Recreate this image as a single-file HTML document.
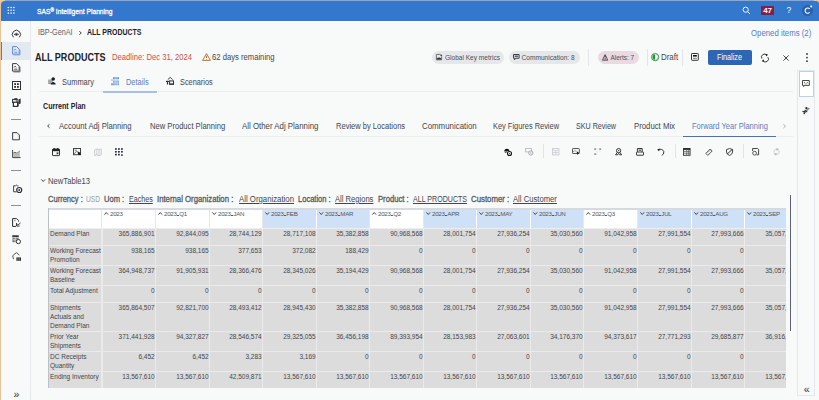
<!DOCTYPE html>
<html><head><meta charset="utf-8">
<style>
*{margin:0;padding:0;box-sizing:border-box}
html,body{width:819px;height:400px;overflow:hidden;background:#f8f9f9;font-family:"Liberation Sans",sans-serif;position:relative}
.a{position:absolute;white-space:nowrap}
svg{position:absolute;overflow:visible}
</style></head><body>

<div class="a" style="left:0px;top:0px;width:819px;height:1px;background:#9ca6b2;"></div>
<div class="a" style="left:0px;top:0px;width:5px;height:5px;background:#efc993;"></div>
<div class="a" style="left:814px;top:0px;width:5px;height:5px;background:#efc993;"></div>
<div class="a" style="left:1px;top:1px;width:818px;height:20px;background:#3378cc;border-top-left-radius:4px;border-top-right-radius:3px"></div>
<svg style="left:0px;top:0px" width="20" height="20" viewBox="0 0 20 20"><g fill="#fff"><circle cx="8.3" cy="7.5" r="0.8"/><circle cx="11.100000000000001" cy="7.5" r="0.8"/><circle cx="13.9" cy="7.5" r="0.8"/><circle cx="8.3" cy="10.3" r="0.8"/><circle cx="11.100000000000001" cy="10.3" r="0.8"/><circle cx="13.9" cy="10.3" r="0.8"/><circle cx="8.3" cy="13.1" r="0.8"/><circle cx="11.100000000000001" cy="13.1" r="0.8"/><circle cx="13.9" cy="13.1" r="0.8"/></g></svg>
<div class="a" style="left:37px;top:7.00px;font-size:7.8px;line-height:7.8px;color:#fff;font-weight:normal;letter-spacing:0px;-webkit-text-stroke:0.3px #fff;transform:scaleX(0.8612827505765044);transform-origin:0 0;">SAS<span style="font-size:5.5px;vertical-align:1.5px">®</span> Intelligent Planning</div>
<svg style="left:742px;top:6px" width="9" height="9" viewBox="0 0 9 9"><circle cx="3.7" cy="3.7" r="2.6" fill="none" stroke="#fff" stroke-width="0.9"/><path d="M5.6 5.6 L7.8 7.8" stroke="#fff" stroke-width="1"/></svg>
<div class="a" style="left:761px;top:6px;width:13px;height:9px;background:#8c1d42;"></div>
<div class="a" style="left:761px;top:6px;width:13px;height:9px;font-size:8px;line-height:9px;color:#fff;font-weight:bold;text-align:center;letter-spacing:-0.2px">47</div>
<div class="a" style="left:786.6px;top:6.00px;font-size:8.5px;line-height:8.5px;color:#fff;font-weight:normal;letter-spacing:0px;">?</div>
<svg style="left:801px;top:4px" width="13" height="13" viewBox="0 0 13 13"><circle cx="6.5" cy="6.6" r="5.6" fill="#2a60ad"/><path d="M8.7 5 A2.6 2.6 0 1 0 8.7 8.3" fill="none" stroke="#fff" stroke-width="1.05"/><circle cx="10.2" cy="2.5" r="1.05" fill="#fff"/></svg>
<div class="a" style="left:1px;top:21px;width:29px;height:379px;background:#f8f9f9;"></div>
<div class="a" style="left:30px;top:21px;width:1px;height:379px;background:#e6e8ec;"></div>
<div class="a" style="left:1px;top:42px;width:29px;height:18px;background:#e3e9f1;"></div>
<div class="a" style="left:1px;top:42px;width:1px;height:18px;background:#4a82d0;"></div>
<div class="a" style="left:0px;top:3px;width:1px;height:397px;background:#e8c49b;"></div>
<div class="a" style="left:37.5px;top:28.00px;font-size:8.5px;line-height:8.5px;color:#5d6269;font-weight:normal;letter-spacing:0px;transform:scaleX(0.8491644282598114);transform-origin:0 0;">IBP-GenAI</div>
<svg style="left:79px;top:30.6px" width="3" height="4" viewBox="0 0 3 4"><path d="M0.3 0.3 L2.3 2 L0.3 3.7" fill="none" stroke="#333" stroke-width="0.9"/></svg>
<div class="a" style="left:86.5px;top:28.00px;font-size:8.5px;line-height:8.5px;color:#1e2229;font-weight:bold;letter-spacing:0px;transform:scaleX(0.8185571697822628);transform-origin:0 0;">ALL PRODUCTS</div>
<div class="a" style="left:750.6px;top:29.00px;font-size:8.5px;line-height:8.5px;color:#5580bf;font-weight:normal;letter-spacing:0px;transform:scaleX(0.9182627317138459);transform-origin:0 0;">Opened items (2)</div>
<div class="a" style="left:35px;top:53.00px;font-size:10px;line-height:10px;color:#1e2229;font-weight:bold;letter-spacing:0px;transform:scaleX(0.90131405061713);transform-origin:0 0;">ALL PRODUCTS</div>
<div class="a" style="left:111.5px;top:53.00px;font-size:8.5px;line-height:8.5px;color:#c8524c;font-weight:normal;letter-spacing:0px;transform:scaleX(0.9005042801984143);transform-origin:0 0;">Deadline: Dec 31, 2024</div>
<svg style="left:202px;top:53px" width="9" height="8" viewBox="0 0 9 8"><path d="M4.5 0.6 L8.4 7.4 L0.6 7.4 Z" fill="none" stroke="#b5651d" stroke-width="0.9" stroke-linejoin="round"/><path d="M4.5 2.8 V5" stroke="#b5651d" stroke-width="0.9"/><circle cx="4.5" cy="6.2" r="0.45" fill="#b5651d"/></svg>
<div class="a" style="left:212px;top:53.00px;font-size:8.5px;line-height:8.5px;color:#42464d;font-weight:normal;letter-spacing:0px;transform:scaleX(0.9012798115959859);transform-origin:0 0;">62 days remaining</div>
<div class="a" style="left:432px;top:51px;width:72px;height:13px;background:#e5e7ea;border-radius:7px"></div>
<div class="a" style="left:445px;top:55.00px;font-size:6.55px;line-height:6.55px;color:#4a4f57;font-weight:normal;letter-spacing:0px;">Global Key metrics</div>
<div class="a" style="left:509px;top:51px;width:71px;height:13px;background:#e5e7ea;border-radius:7px"></div>
<div class="a" style="left:521.5px;top:55.00px;font-size:6.6px;line-height:6.6px;color:#4a4f57;font-weight:normal;letter-spacing:0px;">Communication: 8</div>
<div class="a" style="left:588px;top:49px;width:1px;height:17px;background:#e4e6e9;"></div>
<div class="a" style="left:597.5px;top:51px;width:41.5px;height:13px;background:#ebd9e2;border-radius:7px"></div>
<div class="a" style="left:610.5px;top:55.00px;font-size:6.45px;line-height:6.45px;color:#4a4f57;font-weight:normal;letter-spacing:0px;">Alerts: 7</div>
<div class="a" style="left:647px;top:49px;width:1px;height:17px;background:#e4e6e9;"></div>
<svg style="left:650.5px;top:53px" width="9" height="9" viewBox="0 0 9 9"><circle cx="4.2" cy="4.2" r="3.6" fill="none" stroke="#3c9a4a" stroke-width="1"/><path d="M4.2 1.6 A2.6 2.6 0 0 0 4.2 6.8 Z" fill="#3c9a4a"/></svg>
<div class="a" style="left:660.5px;top:53.00px;font-size:8.5px;line-height:8.5px;color:#42464d;font-weight:normal;letter-spacing:0px;transform:scaleX(0.928367309068738);transform-origin:0 0;">Draft</div>
<div class="a" style="left:681.5px;top:49px;width:1px;height:17px;background:#e4e6e9;"></div>
<svg style="left:691.1px;top:53.3px" width="8" height="8" viewBox="0 0 8 8"><rect x="0.5" y="0.5" width="6.8" height="6.8" rx="0.6" fill="none" stroke="#333" stroke-width="1"/><rect x="2" y="2" width="3.8" height="1.6" fill="#111"/><rect x="2" y="4.8" width="3.8" height="1" fill="#777"/></svg>
<div class="a" style="left:708px;top:50px;width:44px;height:15px;background:#2c66b4;border-radius:2px"></div>
<div class="a" style="left:717px;top:53.00px;font-size:8.5px;line-height:8.5px;color:#fff;font-weight:normal;letter-spacing:0px;transform:scaleX(0.8535538347406413);transform-origin:0 0;">Finalize</div>
<svg style="left:760.8px;top:53.8px" width="8" height="8" viewBox="0 0 8 8"><path d="M5.9 1.3 A3 3 0 0 0 0.9 4.6 M2 6.7 A3 3 0 0 0 6.9 3.2" fill="none" stroke="#222" stroke-width="0.9"/><path d="M4.6 0 L7 0.6 L5.4 2.6Z M3.2 7.8 L0.8 7.2 L2.4 5.2Z" fill="#111"/></svg>
<svg style="left:782.8px;top:55.2px" width="6" height="6" viewBox="0 0 6 6"><path d="M0.4 0.4 L5.6 5.6 M5.6 0.4 L0.4 5.6" stroke="#222" stroke-width="0.85"/></svg>
<svg style="left:805.5px;top:53px" width="2" height="10" viewBox="0 0 2 10"><circle cx="1" cy="1" r="0.9" fill="#333"/><circle cx="1" cy="4.6" r="0.9" fill="#333"/><circle cx="1" cy="8.2" r="0.9" fill="#333"/></svg>
<svg style="left:12px;top:30px" width="10" height="10" viewBox="0 0 10 10"><path d="M1.5 7.3 A4.1 4.1 0 1 1 7.3 7.3" fill="none" stroke="#2b2f36" stroke-width="0.95"/><path d="M2.2 4.4 Q4.4 2.2 6.6 4.4 Q4.4 6.4 2.2 4.4Z" fill="none" stroke="#2b2f36" stroke-width="0.8"/><circle cx="4.4" cy="4.4" r="0.8" fill="#2b2f36"/></svg>
<svg style="left:12.3px;top:46.3px" width="10" height="10" viewBox="0 0 10 10"><path d="M0.6 0.6 H4.7 L7.2 3.1 V8.1 H0.6 Z" fill="none" stroke="#5a8ed6" stroke-width="1" stroke-linejoin="round"/><path d="M1.5 9 H8.1 V3.8" fill="none" stroke="#5a8ed6" stroke-width="0.8" opacity="0.75"/><path d="M2.2 4.4 L3.2 3 L4.2 4.4" fill="none" stroke="#5a8ed6" stroke-width="0.8"/><path d="M2.2 6.2 H5.4" stroke="#5a8ed6" stroke-width="0.9"/></svg>
<svg style="left:12.3px;top:63.3px" width="10" height="10" viewBox="0 0 10 10"><path d="M0.6 0.6 H4.7 L7.2 3.1 V8.1 H0.6 Z" fill="none" stroke="#3a3e45" stroke-width="1" stroke-linejoin="round"/><path d="M1.5 9 H8.1 V3.8" fill="none" stroke="#3a3e45" stroke-width="0.8" opacity="0.75"/><path d="M2.2 4.4 L3.2 3 L4.2 4.4" fill="none" stroke="#3a3e45" stroke-width="0.8"/><path d="M2.2 6.2 H5.4" stroke="#3a3e45" stroke-width="0.9"/></svg>
<svg style="left:12px;top:81px" width="10" height="10" viewBox="0 0 10 10"><rect x="0.5" y="0.5" width="8" height="8" fill="none" stroke="#2b2f36" stroke-width="1"/><rect x="2.2" y="2.2" width="1.8" height="1.8" fill="#2b2f36"/><rect x="5" y="2.2" width="1.8" height="1.8" fill="#2b2f36"/><rect x="2.2" y="5" width="1.8" height="1.8" fill="#2b2f36"/><rect x="5" y="5" width="1.8" height="1.8" fill="#2b2f36"/></svg>
<svg style="left:12px;top:97.8px" width="10" height="10" viewBox="0 0 10 10"><rect x="0.6" y="1.4" width="4.4" height="3.2" fill="none" stroke="#2b2f36" stroke-width="1"/><path d="M2.4 0.2 H5.4 V2.2 H2.4Z" fill="#2b2f36"/><rect x="1.4" y="4.2" width="4.2" height="4.2" fill="#fff" stroke="#2b2f36" stroke-width="1.2"/><path d="M5.6 4.4 L6.6 3.6 V8 L5.6 8.6Z" fill="#2b2f36"/><path d="M6.4 1.4 L8.6 0.6 V5.4 L6.6 6.2Z" fill="#2b2f36"/></svg>
<div class="a" style="left:11px;top:119px;width:10px;height:1px;background:#8d9197;"></div>
<svg style="left:12.1px;top:132.3px" width="10" height="10" viewBox="0 0 10 10"><path d="M0.6 0.6 H5 L7.4 3 V7.8 H0.6 Z" fill="#eef0f2" stroke="#444" stroke-width="1" stroke-linejoin="round"/><rect x="2.6" y="2.6" width="2.4" height="4" fill="#fff"/></svg>
<svg style="left:12px;top:149.5px" width="10" height="10" viewBox="0 0 10 10"><path d="M0.6 0 V7.6 H8.6" fill="none" stroke="#444" stroke-width="1"/><path d="M1.2 3.2 L3 2.2 L5 3.4 L7.8 1" fill="none" stroke="#444" stroke-width="0.9"/><path d="M1.2 3.6 L3 2.6 L5 3.8 L7.8 1.5 V7 H1.2Z" fill="#bbb"/></svg>
<div class="a" style="left:11px;top:170px;width:10px;height:1px;background:#8d9197;"></div>
<svg style="left:12.5px;top:183.6px" width="10" height="10" viewBox="0 0 10 10"><path d="M3.6 7.8 H0.6 V1.8 H2.6 Q3.3 0.4 4.2 1.8 H5.4" fill="none" stroke="#444" stroke-width="1"/><circle cx="6.2" cy="6" r="2.5" fill="none" stroke="#2b2f36" stroke-width="1.2"/><circle cx="6.2" cy="6" r="0.9" fill="#2b2f36"/></svg>
<div class="a" style="left:11px;top:205px;width:10px;height:1px;background:#8d9197;"></div>
<svg style="left:12px;top:218px" width="10" height="10" viewBox="0 0 10 10"><path d="M4 8.4 H0.6 V0.6 H4.6 L6.6 2.6 V3.6" fill="none" stroke="#2b2f36" stroke-width="1"/><path d="M2.2 2.6 H3.6" stroke="#666" stroke-width="0.8"/><path d="M4.6 5 V8 H7.6" fill="none" stroke="#2b2f36" stroke-width="1"/><path d="M5.4 6 L6.4 7 L8.4 4.6" fill="none" stroke="#2b2f36" stroke-width="0.9"/></svg>
<svg style="left:12px;top:235px" width="10" height="10" viewBox="0 0 10 10"><rect x="0.4" y="0.4" width="6.2" height="6.8" fill="#777"/><path d="M0.4 2.6 H6.6 M0.4 4.8 H6.6 M3.2 0.4 V7.2" stroke="#eee" stroke-width="0.7"/><rect x="0.4" y="0.4" width="6.2" height="1.5" fill="#2b2f36"/><circle cx="6.4" cy="6.6" r="2.1" fill="#fff" stroke="#2b2f36" stroke-width="1"/></svg>
<svg style="left:12px;top:252px" width="10" height="10" viewBox="0 0 10 10"><path d="M1.6 7.2 L0.6 3.8 L4.4 0.6 L7.4 3.2" fill="none" stroke="#555" stroke-width="1"/><rect x="4.4" y="5.4" width="4.6" height="3.4" fill="#333"/><path d="M5.9 5.4 V8.8 M7.4 5.4 V8.8" stroke="#aaa" stroke-width="0.5"/></svg>
<div class="a" style="left:13.6px;top:389.00px;font-size:10.5px;line-height:10.5px;color:#333;font-weight:normal;letter-spacing:0px;">»</div>
<svg style="left:47.8px;top:77.3px" width="9" height="9" viewBox="0 0 9 9"><rect x="0.3" y="2.6" width="4.4" height="4.4" fill="#8a8d92"/><path d="M0.8 3.8 H4.2 M0.8 5.4 H4.2" stroke="#d8d9db" stroke-width="0.6"/><circle cx="5.2" cy="2" r="1.8" fill="#1d2026"/><path d="M2.8 7.6 V6.6 Q5.2 3.4 7.6 6.6 V7.6Z" fill="#1d2026"/></svg>
<svg style="left:111px;top:77px" width="9" height="9" viewBox="0 0 9 9"><rect x="2" y="0.3" width="6" height="1.5" fill="#4d84d0"/><rect x="0" y="2.5" width="8" height="1.2" fill="#9dbce6"/><rect x="2" y="4.3" width="6" height="1.3" fill="#5f90d6"/><rect x="0" y="6.3" width="8" height="1.9" fill="#7aa4de"/><path d="M4.1 0 V8.4 M6.1 0 V8.4" stroke="#f8f9f9" stroke-width="0.45"/></svg>
<svg style="left:165.8px;top:77.3px" width="9" height="9" viewBox="0 0 9 9"><path d="M1.8 2.6 L4.2 0.4 L6.6 2.6" fill="none" stroke="#2b2f36" stroke-width="0.9"/><rect x="0" y="3.8" width="2.9" height="1.2" fill="#2b2f36"/><rect x="0.9" y="4.6" width="1.2" height="2.9" fill="#2b2f36"/><rect x="3.6" y="3.9" width="3.9" height="3.4" fill="none" stroke="#2b2f36" stroke-width="1"/><rect x="3.4" y="6.5" width="4.3" height="1.1" fill="#2b2f36"/></svg>
<svg style="left:436.3px;top:53.9px" width="7" height="7" viewBox="0 0 7 7"><path d="M0.4 0.4 H4.4 M0.4 0.4 V5.8 H5.6 V2.4" fill="none" stroke="#555" stroke-width="0.8"/><path d="M0.8 5.6 V4.4 Q3 2.6 5.3 4.4 V5.6Z" fill="#2e3238"/><circle cx="5.2" cy="1.3" r="0.9" fill="#444"/></svg>
<svg style="left:513.1px;top:53.9px" width="7" height="7" viewBox="0 0 7 7"><path d="M0.5 0.5 H6.1 V4.2 H2.6 L1.6 5.8 V4.2 H0.5 Z" fill="none" stroke="#3a3e45" stroke-width="1" stroke-linejoin="round"/><rect x="1.7" y="1.6" width="3.2" height="1.2" fill="#3a3e45"/></svg>
<svg style="left:601.8px;top:53.9px" width="7" height="7" viewBox="0 0 7 7"><path d="M3.1 0.6 L5.8 6.2 H0.4Z" fill="none" stroke="#555" stroke-width="1" stroke-linejoin="round"/><circle cx="3.1" cy="2.2" r="0.9" fill="#555"/><path d="M3.1 3.4 V6" stroke="#555" stroke-width="0.9"/></svg>
<svg style="left:651.1px;top:53.1px" width="8" height="8" viewBox="0 0 8 8"><circle cx="3.9" cy="3.85" r="3.5" fill="none" stroke="#5cae6b" stroke-width="0.6"/><rect x="2.3" y="2.1" width="1.7" height="3.5" fill="#2a8a3a"/></svg>
<div class="a" style="left:39px;top:91px;width:754px;height:1px;background:#eceef0;"></div>
<div class="a" style="left:103px;top:91px;width:54px;height:2px;background:#a7c0e4;"></div>
<div class="a" style="left:62px;top:78.00px;font-size:8.5px;line-height:8.5px;color:#42464d;font-weight:normal;letter-spacing:0px;transform:scaleX(0.8799495146152504);transform-origin:0 0;">Summary</div>
<div class="a" style="left:125.7px;top:78.00px;font-size:8.5px;line-height:8.5px;color:#5a80c2;font-weight:normal;letter-spacing:0px;transform:scaleX(0.8737004322495772);transform-origin:0 0;">Details</div>
<div class="a" style="left:180px;top:78.00px;font-size:8.5px;line-height:8.5px;color:#42464d;font-weight:normal;letter-spacing:0px;transform:scaleX(0.8651341243645807);transform-origin:0 0;">Scenarios</div>
<div class="a" style="left:43.2px;top:102.00px;font-size:8.5px;line-height:8.5px;color:#1e2229;font-weight:bold;letter-spacing:0px;transform:scaleX(0.8371186521801561);transform-origin:0 0;">Current Plan</div>
<svg style="left:46.6px;top:123.8px" width="3" height="4" viewBox="0 0 3 4"><path d="M2.5 0.3 L0.6 2 L2.5 3.7" fill="none" stroke="#333" stroke-width="0.9"/></svg>
<div class="a" style="left:58.9px;top:122.00px;font-size:8.5px;line-height:8.5px;color:#42464d;font-weight:normal;letter-spacing:0px;transform:scaleX(0.903421124986026);transform-origin:0 0;">Account Adj Planning</div>
<div class="a" style="left:149.6px;top:122.00px;font-size:8.5px;line-height:8.5px;color:#42464d;font-weight:normal;letter-spacing:0px;transform:scaleX(0.8941362253547294);transform-origin:0 0;">New Product Planning</div>
<div class="a" style="left:241.9px;top:122.00px;font-size:8.5px;line-height:8.5px;color:#42464d;font-weight:normal;letter-spacing:0px;transform:scaleX(0.9247542658508803);transform-origin:0 0;">All Other Adj Planning</div>
<div class="a" style="left:335.9px;top:122.00px;font-size:8.5px;line-height:8.5px;color:#42464d;font-weight:normal;letter-spacing:0px;transform:scaleX(0.8863885052503672);transform-origin:0 0;">Review by Locations</div>
<div class="a" style="left:421.5px;top:122.00px;font-size:8.5px;line-height:8.5px;color:#42464d;font-weight:normal;letter-spacing:0px;transform:scaleX(0.9263060411119748);transform-origin:0 0;">Communication</div>
<div class="a" style="left:493.3px;top:122.00px;font-size:8.5px;line-height:8.5px;color:#42464d;font-weight:normal;letter-spacing:0px;transform:scaleX(0.87321496057651);transform-origin:0 0;">Key Figures Review</div>
<div class="a" style="left:576.4px;top:122.00px;font-size:8.5px;line-height:8.5px;color:#42464d;font-weight:normal;letter-spacing:0px;transform:scaleX(0.8384207967658572);transform-origin:0 0;">SKU Review</div>
<div class="a" style="left:633.5px;top:122.00px;font-size:8.5px;line-height:8.5px;color:#42464d;font-weight:normal;letter-spacing:0px;transform:scaleX(0.9136689081848055);transform-origin:0 0;">Product Mix</div>
<div class="a" style="left:691.6px;top:122.00px;font-size:8.5px;line-height:8.5px;color:#5a80c2;font-weight:normal;letter-spacing:0px;transform:scaleX(0.8833039565185357);transform-origin:0 0;">Forward Year Planning</div>
<div class="a" style="left:39px;top:136px;width:754px;height:1px;background:#eceef0;"></div>
<div class="a" style="left:683px;top:135.5px;width:93px;height:1.5px;background:#4573bf;"></div>
<svg style="left:783px;top:124px" width="3" height="4.5" viewBox="0 0 3 4.5"><path d="M0.4 0.3 L2.4 2.2 L0.4 4.1" fill="none" stroke="#a0a4aa" stroke-width="0.9"/></svg>
<div class="a" style="left:797px;top:70px;width:18px;height:326px;background:#f8f9f9;border:1px solid #e4e7eb"></div>
<div class="a" style="left:798.5px;top:71px;width:15.5px;height:26px;background:#fff;border:1px solid #bcd0ea"></div>
<div class="a" style="left:542.5px;top:144px;width:1px;height:14px;background:#e0e3e7;"></div>
<div class="a" style="left:674.5px;top:144px;width:1px;height:14px;background:#e0e3e7;"></div>
<div class="a" style="left:742.5px;top:144px;width:1px;height:14px;background:#e0e3e7;"></div>
<svg style="left:52px;top:148px" width="8" height="8" viewBox="0 0 8 8"><rect x="0.5" y="1" width="7" height="6.6" rx="0.6" fill="none" stroke="#333" stroke-width="1"/><rect x="0.5" y="1" width="7" height="2.2" fill="#222"/><rect x="1.6" y="0" width="1.1" height="1.4" fill="#222"/><rect x="5.2" y="0" width="1.1" height="1.4" fill="#222"/><rect x="4.6" y="4.4" width="1.8" height="1.8" fill="#333"/></svg>
<svg style="left:73px;top:148.1px" width="8" height="8" viewBox="0 0 8 8"><rect x="0.5" y="0.5" width="7" height="6.2" fill="none" stroke="#444" stroke-width="1"/><path d="M1.6 2.2 H3.8 M1 6 L3.6 3.2 L5 4 L7 5" fill="none" stroke="#555" stroke-width="0.8"/><path d="M4.6 4 L7.5 4.8 V6.7 H5.2Z" fill="#111"/></svg>
<svg style="left:94.1px;top:147.8px" width="8" height="8" viewBox="0 0 8 8"><path d="M0.6 2 L2.8 1 L5 1.8 L7.2 0.8 V6.8 L5 7.6 L2.8 6.8 L0.6 7.6Z" fill="none" stroke="#c4c7cb" stroke-width="0.9"/><path d="M2.8 1 V6.8 M5 1.8 V7.6" stroke="#c4c7cb" stroke-width="0.8"/></svg>
<svg style="left:115px;top:148px" width="8" height="8" viewBox="0 0 8 8"><g fill="#2b2f36"><rect x="0" y="0.2" width="1.8" height="1.6"/><rect x="3" y="0.2" width="1.8" height="1.6"/><rect x="6" y="0.2" width="1.8" height="1.6"/><rect x="0" y="3" width="1.8" height="1.6"/><rect x="3" y="3" width="1.8" height="1.6"/><rect x="6" y="3" width="1.8" height="1.6"/><rect x="0" y="5.8" width="1.8" height="1.6"/><rect x="3" y="5.8" width="1.8" height="1.6"/><rect x="6" y="6.4" width="1.8" height="1.4"/></g></svg>
<svg style="left:504.2px;top:147.6px" width="8" height="8" viewBox="0 0 8 8"><path d="M0.3 3.4 A2.6 2.6 0 0 1 5.5 3.4 Z" fill="#111"/><rect x="0.8" y="3.9" width="1.8" height="0.8" fill="#222"/><circle cx="5.5" cy="5.5" r="2.7" fill="#f8f9f9"/><circle cx="5.5" cy="5.5" r="2" fill="none" stroke="#111" stroke-width="1.1"/><circle cx="5.5" cy="5.5" r="0.6" fill="#333"/></svg>
<svg style="left:525.1px;top:147.8px" width="8" height="8" viewBox="0 0 8 8"><rect x="0.5" y="0.5" width="6" height="3.4" fill="none" stroke="#b8bbc0" stroke-width="0.9"/><circle cx="5.8" cy="5" r="2.1" fill="#f8f9f9" stroke="#a8abb0" stroke-width="1"/><path d="M5.8 4 V6" stroke="#aaa" stroke-width="0.7"/></svg>
<svg style="left:551.8px;top:147.8px" width="8" height="8" viewBox="0 0 8 8"><rect x="0.5" y="0.5" width="6.4" height="6.4" fill="none" stroke="#c9ccd0" stroke-width="0.9"/><path d="M1 2.4 H6.5 M1 4.6 H6.5 M3.7 2.4 V6.6" stroke="#c9ccd0" stroke-width="0.8"/></svg>
<svg style="left:572px;top:148px" width="8" height="8" viewBox="0 0 8 8"><rect x="0.5" y="0.5" width="6.8" height="5" rx="0.6" fill="none" stroke="#555" stroke-width="1"/><path d="M1 4 Q2.6 2 4.4 3" fill="none" stroke="#666" stroke-width="0.7"/><path d="M4.6 3.2 L7.6 5.2 L6 5.8 L5.4 7.2Z" fill="#111"/></svg>
<svg style="left:593.7px;top:148px" width="8" height="8" viewBox="0 0 8 8"><g fill="#9a9da2"><rect x="0.2" y="0.2" width="2" height="1.8"/><rect x="5.2" y="0.2" width="2" height="1.8"/><rect x="0.2" y="5.2" width="2" height="1.8"/></g><path d="M1.2 3.3 H7 M3.6 3.3 V7" stroke="#e0e2e5" stroke-width="0.4"/></svg>
<svg style="left:615.1px;top:147.8px" width="8" height="8" viewBox="0 0 8 8"><circle cx="3.6" cy="2.6" r="2.1" fill="none" stroke="#333" stroke-width="1"/><circle cx="3.6" cy="2.6" r="0.7" fill="#333"/><path d="M2.2 4.4 L0.6 6.8 H2.6 L3.6 5.4 L4.6 6.8 H6.6 L5 4.4" fill="none" stroke="#333" stroke-width="1"/></svg>
<svg style="left:636.1px;top:147.8px" width="8" height="8" viewBox="0 0 8 8"><path d="M1.4 3.8 V0.5 H6.2 V3.8" fill="none" stroke="#333" stroke-width="1"/><rect x="2.6" y="1.6" width="2.6" height="1.2" fill="#555"/><rect x="0.5" y="4" width="7" height="3.2" rx="0.5" fill="none" stroke="#333" stroke-width="1"/></svg>
<svg style="left:657px;top:147.8px" width="8" height="8" viewBox="0 0 8 8"><path d="M1.4 1.6 Q5.4 0.4 6.8 3.6 Q7.2 6.4 4.8 7.4" fill="none" stroke="#333" stroke-width="1"/><path d="M0.2 1.8 L2.6 0.4 L2.2 3.2Z" fill="#111"/></svg>
<svg style="left:683.3px;top:147.8px" width="8" height="8" viewBox="0 0 8 8"><rect x="0.5" y="0.5" width="6.6" height="6.8" fill="none" stroke="#444" stroke-width="1"/><rect x="0.5" y="0.5" width="6.6" height="1.3" fill="#111"/><path d="M0.6 3.4 H7 M0.6 5.2 H7 M3.6 1.6 V7.2 M5.4 1.6 V7.2" stroke="#666" stroke-width="0.8"/></svg>
<svg style="left:704.8px;top:147.7px" width="8" height="8" viewBox="0 0 8 8"><path d="M0.8 5.4 L5.2 1 L7.2 3 L2.8 7.4Z" fill="none" stroke="#555" stroke-width="1" stroke-linejoin="round"/><path d="M2.6 4.6 L3.2 5.2 M3.8 3.4 L4.4 4 M5 2.2 L5.6 2.8" stroke="#555" stroke-width="0.8"/></svg>
<svg style="left:726px;top:147.8px" width="8" height="8" viewBox="0 0 8 8"><path d="M3.5 0.5 L6.6 1.6 V4 Q6.4 6.4 3.5 7.4 Q0.6 6.4 0.5 4 V1.6Z" fill="none" stroke="#444" stroke-width="1"/><path d="M1.2 6 L6.4 1.4" stroke="#333" stroke-width="1"/></svg>
<svg style="left:752.1px;top:147.8px" width="8" height="8" viewBox="0 0 8 8"><path d="M0.6 3 V0.5 H5.6 L6.6 1.4 V6.8 H4.6" fill="none" stroke="#444" stroke-width="1"/><circle cx="2.6" cy="5.2" r="1.9" fill="none" stroke="#555" stroke-width="1"/></svg>
<svg style="left:773.3px;top:148px" width="8" height="8" viewBox="0 0 8 8"><path d="M5.6 1.6 A2.9 2.9 0 0 0 1 4.6 M1.2 5.6 A2.9 2.9 0 0 0 6 2.6" fill="none" stroke="#c9ccd0" stroke-width="1"/><rect x="3.2" y="0.4" width="2" height="2" fill="#b9bcc0"/><rect x="1.6" y="5.2" width="2" height="2" fill="#b9bcc0"/></svg>
<svg style="left:802px;top:80px" width="8" height="8" viewBox="0 0 8 8"><path d="M0.5 0.5 H7.3 V5.4 H2.4 L1.6 6.6 V5.4 H0.5Z" fill="none" stroke="#333" stroke-width="0.9" stroke-linejoin="round"/><circle cx="2.4" cy="2.4" r="0.5" fill="#333"/><circle cx="5.3" cy="2.4" r="0.5" fill="#333"/><path d="M2.6 3.6 Q3.9 4.4 5.2 3.6" fill="none" stroke="#555" stroke-width="0.6"/></svg>
<svg style="left:802px;top:107.3px" width="8" height="8" viewBox="0 0 8 8"><path d="M1.2 6.6 L7.4 1" stroke="#8a8d92" stroke-width="1.6"/><circle cx="4.4" cy="1.2" r="1.1" fill="#1f2329"/><path d="M2.6 2.8 L5.2 5.2" stroke="#2b2f36" stroke-width="1.1"/><path d="M0.4 4.4 L3 4.6 L2.4 7.2" fill="none" stroke="#2b2f36" stroke-width="1"/></svg>
<div class="a" style="left:803.8px;top:384.00px;font-size:10.5px;line-height:10.5px;color:#333;font-weight:normal;letter-spacing:0px;">«</div>
<svg style="left:41px;top:179px" width="4.5" height="3" viewBox="0 0 4.5 3"><path d="M0.3 0.4 L2.2 2.5 L4.1 0.4" fill="none" stroke="#333" stroke-width="0.9"/></svg>
<div class="a" style="left:48.3px;top:177.00px;font-size:8.5px;line-height:8.5px;color:#42464d;font-weight:normal;letter-spacing:0px;transform:scaleX(0.8999754706247685);transform-origin:0 0;">NewTable13</div>
<div class="a" style="left:48.3px;top:195.00px;font-size:8.5px;line-height:8.5px;color:#555a61;font-weight:normal;letter-spacing:0px;-webkit-text-stroke:0.3px #555a61;transform:scaleX(0.8876511688732236);transform-origin:0 0;">Currency :</div>
<div class="a" style="left:85.9px;top:195.00px;font-size:8.5px;line-height:8.5px;color:#9ba1a8;font-weight:normal;letter-spacing:0px;transform:scaleX(0.7856777493606135);transform-origin:0 0;">USD</div>
<div class="a" style="left:104.2px;top:195.00px;font-size:8.5px;line-height:8.5px;color:#555a61;font-weight:normal;letter-spacing:0px;-webkit-text-stroke:0.3px #555a61;transform:scaleX(0.8866564714498026);transform-origin:0 0;">Uom :</div>
<div class="a" style="left:128.9px;top:195.00px;font-size:8.5px;line-height:8.5px;color:#42464d;font-weight:normal;letter-spacing:0px;text-decoration:underline;transform:scaleX(0.8394671351193085);transform-origin:0 0;">Eaches</div>
<div class="a" style="left:156.7px;top:195.00px;font-size:8.5px;line-height:8.5px;color:#555a61;font-weight:normal;letter-spacing:0px;-webkit-text-stroke:0.3px #555a61;transform:scaleX(0.9123479783973144);transform-origin:0 0;">Internal Organization :</div>
<div class="a" style="left:238.5px;top:195.00px;font-size:8.5px;line-height:8.5px;color:#42464d;font-weight:normal;letter-spacing:0px;text-decoration:underline;transform:scaleX(0.91663309856003);transform-origin:0 0;">All Organization</div>
<div class="a" style="left:298px;top:195.00px;font-size:8.5px;line-height:8.5px;color:#555a61;font-weight:normal;letter-spacing:0px;-webkit-text-stroke:0.3px #555a61;transform:scaleX(0.8871496982984161);transform-origin:0 0;">Location :</div>
<div class="a" style="left:335.3px;top:195.00px;font-size:8.5px;line-height:8.5px;color:#42464d;font-weight:normal;letter-spacing:0px;text-decoration:underline;transform:scaleX(0.8931500315156465);transform-origin:0 0;">All Regions</div>
<div class="a" style="left:377.6px;top:195.00px;font-size:8.5px;line-height:8.5px;color:#555a61;font-weight:normal;letter-spacing:0px;-webkit-text-stroke:0.3px #555a61;transform:scaleX(0.8995607613469976);transform-origin:0 0;">Product :</div>
<div class="a" style="left:412.7px;top:195.00px;font-size:8.5px;line-height:8.5px;color:#42464d;font-weight:normal;letter-spacing:0px;text-decoration:underline;transform:scaleX(0.8330535423338391);transform-origin:0 0;">ALL PRODUCTS</div>
<div class="a" style="left:470.7px;top:195.00px;font-size:8.5px;line-height:8.5px;color:#555a61;font-weight:normal;letter-spacing:0px;-webkit-text-stroke:0.3px #555a61;transform:scaleX(0.9190167689642005);transform-origin:0 0;">Customer :</div>
<div class="a" style="left:512.9px;top:195.00px;font-size:8.5px;line-height:8.5px;color:#42464d;font-weight:normal;letter-spacing:0px;text-decoration:underline;transform:scaleX(0.9023475215030556);transform-origin:0 0;">All Customer</div>
<div class="a" style="left:789.5px;top:195px;width:1.5px;height:136px;background:#5a6272;"></div>
<div class="a" style="left:48px;top:208px;width:738px;height:180px;overflow:hidden;background:#fff">
<div class="a" style="left:0.00px;top:0px;width:800.00px;height:2px;background:#d6dadf;"></div>
<div class="a" style="left:0.00px;top:0px;width:1.00px;height:180px;background:#bcc0c8;"></div>
<div class="a" style="left:1.00px;top:2px;width:800.00px;height:18px;background:#ffffff;"></div>
<div class="a" style="left:53.00px;top:2px;width:1.00px;height:18px;background:#e6e8eb;"></div>
<div class="a" style="left:55.50px;top:3.00px;font-size:6.2px;line-height:6.2px;color:#52565d;letter-spacing:-0.3px"><svg style="position:relative;display:inline-block;left:0;top:0;margin-right:2px;vertical-align:1px" width="4.5" height="3" viewBox="0 0 4.5 3"><path d="M0.4 2.6 L2.25 0.5 L4.1 2.6" fill="none" stroke="#333" stroke-width="0.9"/></svg>2023</div>
<div class="a" style="left:107.00px;top:2px;width:1.00px;height:18px;background:#e6e8eb;"></div>
<div class="a" style="left:109.50px;top:3.00px;font-size:6.2px;line-height:6.2px;color:#52565d;letter-spacing:-0.3px"><svg style="position:relative;display:inline-block;left:0;top:0;margin-right:2px;vertical-align:1px" width="4.5" height="3" viewBox="0 0 4.5 3"><path d="M0.4 2.6 L2.25 0.5 L4.1 2.6" fill="none" stroke="#333" stroke-width="0.9"/></svg>2023<span style="display:inline-block;width:2.6px;height:0.8px;background:#555a61;vertical-align:0;margin:0 0.1px"></span>Q1</div>
<div class="a" style="left:161.00px;top:2px;width:1.00px;height:18px;background:#e6e8eb;"></div>
<div class="a" style="left:163.50px;top:3.00px;font-size:6.2px;line-height:6.2px;color:#52565d;letter-spacing:-0.3px"><svg style="position:relative;display:inline-block;left:0;top:0;margin-right:2px;vertical-align:1px" width="4.5" height="3" viewBox="0 0 4.5 3"><path d="M0.4 0.4 L2.25 2.5 L4.1 0.4" fill="none" stroke="#333" stroke-width="0.9"/></svg>2023<span style="display:inline-block;width:2.6px;height:0.8px;background:#555a61;vertical-align:0;margin:0 0.1px"></span>JAN</div>
<div class="a" style="left:215.00px;top:2px;width:53.00px;height:18px;background:#cfe1f6;"></div>
<div class="a" style="left:214.00px;top:2px;width:1.00px;height:18px;background:#e6e8eb;"></div>
<div class="a" style="left:216.50px;top:3.00px;font-size:6.2px;line-height:6.2px;color:#52565d;letter-spacing:-0.3px"><svg style="position:relative;display:inline-block;left:0;top:0;margin-right:2px;vertical-align:1px" width="4.5" height="3" viewBox="0 0 4.5 3"><path d="M0.4 0.4 L2.25 2.5 L4.1 0.4" fill="none" stroke="#333" stroke-width="0.9"/></svg>2023<span style="display:inline-block;width:2.6px;height:0.8px;background:#555a61;vertical-align:0;margin:0 0.1px"></span>FEB</div>
<div class="a" style="left:269.00px;top:2px;width:52.00px;height:18px;background:#cfe1f6;"></div>
<div class="a" style="left:268.00px;top:2px;width:1.00px;height:18px;background:#ffffff;"></div>
<div class="a" style="left:270.50px;top:3.00px;font-size:6.2px;line-height:6.2px;color:#52565d;letter-spacing:-0.3px"><svg style="position:relative;display:inline-block;left:0;top:0;margin-right:2px;vertical-align:1px" width="4.5" height="3" viewBox="0 0 4.5 3"><path d="M0.4 0.4 L2.25 2.5 L4.1 0.4" fill="none" stroke="#333" stroke-width="0.9"/></svg>2023<span style="display:inline-block;width:2.6px;height:0.8px;background:#555a61;vertical-align:0;margin:0 0.1px"></span>MAR</div>
<div class="a" style="left:321.00px;top:2px;width:1.00px;height:18px;background:#e6e8eb;"></div>
<div class="a" style="left:323.50px;top:3.00px;font-size:6.2px;line-height:6.2px;color:#52565d;letter-spacing:-0.3px"><svg style="position:relative;display:inline-block;left:0;top:0;margin-right:2px;vertical-align:1px" width="4.5" height="3" viewBox="0 0 4.5 3"><path d="M0.4 2.6 L2.25 0.5 L4.1 2.6" fill="none" stroke="#333" stroke-width="0.9"/></svg>2023<span style="display:inline-block;width:2.6px;height:0.8px;background:#555a61;vertical-align:0;margin:0 0.1px"></span>Q2</div>
<div class="a" style="left:376.00px;top:2px;width:52.00px;height:18px;background:#cfe1f6;"></div>
<div class="a" style="left:375.00px;top:2px;width:1.00px;height:18px;background:#e6e8eb;"></div>
<div class="a" style="left:377.50px;top:3.00px;font-size:6.2px;line-height:6.2px;color:#52565d;letter-spacing:-0.3px"><svg style="position:relative;display:inline-block;left:0;top:0;margin-right:2px;vertical-align:1px" width="4.5" height="3" viewBox="0 0 4.5 3"><path d="M0.4 0.4 L2.25 2.5 L4.1 0.4" fill="none" stroke="#333" stroke-width="0.9"/></svg>2023<span style="display:inline-block;width:2.6px;height:0.8px;background:#555a61;vertical-align:0;margin:0 0.1px"></span>APR</div>
<div class="a" style="left:429.00px;top:2px;width:53.00px;height:18px;background:#cfe1f6;"></div>
<div class="a" style="left:428.00px;top:2px;width:1.00px;height:18px;background:#ffffff;"></div>
<div class="a" style="left:430.50px;top:3.00px;font-size:6.2px;line-height:6.2px;color:#52565d;letter-spacing:-0.3px"><svg style="position:relative;display:inline-block;left:0;top:0;margin-right:2px;vertical-align:1px" width="4.5" height="3" viewBox="0 0 4.5 3"><path d="M0.4 0.4 L2.25 2.5 L4.1 0.4" fill="none" stroke="#333" stroke-width="0.9"/></svg>2023<span style="display:inline-block;width:2.6px;height:0.8px;background:#555a61;vertical-align:0;margin:0 0.1px"></span>MAY</div>
<div class="a" style="left:483.00px;top:2px;width:52.00px;height:18px;background:#cfe1f6;"></div>
<div class="a" style="left:482.00px;top:2px;width:1.00px;height:18px;background:#ffffff;"></div>
<div class="a" style="left:484.50px;top:3.00px;font-size:6.2px;line-height:6.2px;color:#52565d;letter-spacing:-0.3px"><svg style="position:relative;display:inline-block;left:0;top:0;margin-right:2px;vertical-align:1px" width="4.5" height="3" viewBox="0 0 4.5 3"><path d="M0.4 0.4 L2.25 2.5 L4.1 0.4" fill="none" stroke="#333" stroke-width="0.9"/></svg>2023<span style="display:inline-block;width:2.6px;height:0.8px;background:#555a61;vertical-align:0;margin:0 0.1px"></span>JUN</div>
<div class="a" style="left:535.00px;top:2px;width:1.00px;height:18px;background:#e6e8eb;"></div>
<div class="a" style="left:537.50px;top:3.00px;font-size:6.2px;line-height:6.2px;color:#52565d;letter-spacing:-0.3px"><svg style="position:relative;display:inline-block;left:0;top:0;margin-right:2px;vertical-align:1px" width="4.5" height="3" viewBox="0 0 4.5 3"><path d="M0.4 2.6 L2.25 0.5 L4.1 2.6" fill="none" stroke="#333" stroke-width="0.9"/></svg>2023<span style="display:inline-block;width:2.6px;height:0.8px;background:#555a61;vertical-align:0;margin:0 0.1px"></span>Q3</div>
<div class="a" style="left:590.00px;top:2px;width:53.00px;height:18px;background:#cfe1f6;"></div>
<div class="a" style="left:589.00px;top:2px;width:1.00px;height:18px;background:#e6e8eb;"></div>
<div class="a" style="left:591.50px;top:3.00px;font-size:6.2px;line-height:6.2px;color:#52565d;letter-spacing:-0.3px"><svg style="position:relative;display:inline-block;left:0;top:0;margin-right:2px;vertical-align:1px" width="4.5" height="3" viewBox="0 0 4.5 3"><path d="M0.4 0.4 L2.25 2.5 L4.1 0.4" fill="none" stroke="#333" stroke-width="0.9"/></svg>2023<span style="display:inline-block;width:2.6px;height:0.8px;background:#555a61;vertical-align:0;margin:0 0.1px"></span>JUL</div>
<div class="a" style="left:644.00px;top:2px;width:52.00px;height:18px;background:#cfe1f6;"></div>
<div class="a" style="left:643.00px;top:2px;width:1.00px;height:18px;background:#ffffff;"></div>
<div class="a" style="left:645.50px;top:3.00px;font-size:6.2px;line-height:6.2px;color:#52565d;letter-spacing:-0.3px"><svg style="position:relative;display:inline-block;left:0;top:0;margin-right:2px;vertical-align:1px" width="4.5" height="3" viewBox="0 0 4.5 3"><path d="M0.4 0.4 L2.25 2.5 L4.1 0.4" fill="none" stroke="#333" stroke-width="0.9"/></svg>2023<span style="display:inline-block;width:2.6px;height:0.8px;background:#555a61;vertical-align:0;margin:0 0.1px"></span>AUG</div>
<div class="a" style="left:697.00px;top:2px;width:53.00px;height:18px;background:#cfe1f6;"></div>
<div class="a" style="left:696.00px;top:2px;width:1.00px;height:18px;background:#ffffff;"></div>
<div class="a" style="left:698.50px;top:3.00px;font-size:6.2px;line-height:6.2px;color:#52565d;letter-spacing:-0.3px"><svg style="position:relative;display:inline-block;left:0;top:0;margin-right:2px;vertical-align:1px" width="4.5" height="3" viewBox="0 0 4.5 3"><path d="M0.4 0.4 L2.25 2.5 L4.1 0.4" fill="none" stroke="#333" stroke-width="0.9"/></svg>2023<span style="display:inline-block;width:2.6px;height:0.8px;background:#555a61;vertical-align:0;margin:0 0.1px"></span>SEP</div>
<div class="a" style="left:1.00px;top:20px;width:800.00px;height:1px;background:#efedee;"></div>
<div class="a" style="left:1.00px;top:21px;width:800.00px;height:16px;background:#dcdcdc;"></div>
<div class="a" style="left:2px;top:21px;font-size:6.5px;line-height:9px;color:#42464d;white-space:nowrap">Demand Plan</div>
<div class="a" style="left:26.70px;width:80px;text-align:right;top:23.00px;font-size:6.5px;line-height:6.5px;color:#42464d;">365,886,901</div>
<div class="a" style="left:80.70px;width:80px;text-align:right;top:23.00px;font-size:6.5px;line-height:6.5px;color:#42464d;">92,844,095</div>
<div class="a" style="left:133.70px;width:80px;text-align:right;top:23.00px;font-size:6.5px;line-height:6.5px;color:#42464d;">28,744,129</div>
<div class="a" style="left:187.70px;width:80px;text-align:right;top:23.00px;font-size:6.5px;line-height:6.5px;color:#42464d;">28,717,108</div>
<div class="a" style="left:240.70px;width:80px;text-align:right;top:23.00px;font-size:6.5px;line-height:6.5px;color:#42464d;">35,382,858</div>
<div class="a" style="left:294.70px;width:80px;text-align:right;top:23.00px;font-size:6.5px;line-height:6.5px;color:#42464d;">90,968,568</div>
<div class="a" style="left:347.70px;width:80px;text-align:right;top:23.00px;font-size:6.5px;line-height:6.5px;color:#42464d;">28,001,754</div>
<div class="a" style="left:401.70px;width:80px;text-align:right;top:23.00px;font-size:6.5px;line-height:6.5px;color:#42464d;">27,936,254</div>
<div class="a" style="left:454.70px;width:80px;text-align:right;top:23.00px;font-size:6.5px;line-height:6.5px;color:#42464d;">35,030,560</div>
<div class="a" style="left:508.70px;width:80px;text-align:right;top:23.00px;font-size:6.5px;line-height:6.5px;color:#42464d;">91,042,958</div>
<div class="a" style="left:562.70px;width:80px;text-align:right;top:23.00px;font-size:6.5px;line-height:6.5px;color:#42464d;">27,991,554</div>
<div class="a" style="left:615.70px;width:80px;text-align:right;top:23.00px;font-size:6.5px;line-height:6.5px;color:#42464d;">27,993,666</div>
<div class="a" style="left:669.70px;width:80px;text-align:right;top:23.00px;font-size:6.5px;line-height:6.5px;color:#42464d;">35,057,030</div>
<div class="a" style="left:1.00px;top:38px;width:800.00px;height:19px;background:#dcdcdc;"></div>
<div class="a" style="left:2px;top:38px;font-size:6.5px;line-height:9px;color:#42464d;white-space:nowrap">Working Forecast<br>Promotion</div>
<div class="a" style="left:26.70px;width:80px;text-align:right;top:40.00px;font-size:6.5px;line-height:6.5px;color:#42464d;">938,165</div>
<div class="a" style="left:80.70px;width:80px;text-align:right;top:40.00px;font-size:6.5px;line-height:6.5px;color:#42464d;">938,165</div>
<div class="a" style="left:133.70px;width:80px;text-align:right;top:40.00px;font-size:6.5px;line-height:6.5px;color:#42464d;">377,653</div>
<div class="a" style="left:187.70px;width:80px;text-align:right;top:40.00px;font-size:6.5px;line-height:6.5px;color:#42464d;">372,082</div>
<div class="a" style="left:240.70px;width:80px;text-align:right;top:40.00px;font-size:6.5px;line-height:6.5px;color:#42464d;">188,429</div>
<div class="a" style="left:294.70px;width:80px;text-align:right;top:40.00px;font-size:6.5px;line-height:6.5px;color:#42464d;">0</div>
<div class="a" style="left:347.70px;width:80px;text-align:right;top:40.00px;font-size:6.5px;line-height:6.5px;color:#42464d;">0</div>
<div class="a" style="left:401.70px;width:80px;text-align:right;top:40.00px;font-size:6.5px;line-height:6.5px;color:#42464d;">0</div>
<div class="a" style="left:454.70px;width:80px;text-align:right;top:40.00px;font-size:6.5px;line-height:6.5px;color:#42464d;">0</div>
<div class="a" style="left:508.70px;width:80px;text-align:right;top:40.00px;font-size:6.5px;line-height:6.5px;color:#42464d;">0</div>
<div class="a" style="left:562.70px;width:80px;text-align:right;top:40.00px;font-size:6.5px;line-height:6.5px;color:#42464d;">0</div>
<div class="a" style="left:615.70px;width:80px;text-align:right;top:40.00px;font-size:6.5px;line-height:6.5px;color:#42464d;">0</div>
<div class="a" style="left:669.70px;width:80px;text-align:right;top:40.00px;font-size:6.5px;line-height:6.5px;color:#42464d;">0</div>
<div class="a" style="left:1.00px;top:58px;width:800.00px;height:19px;background:#dcdcdc;"></div>
<div class="a" style="left:2px;top:58px;font-size:6.5px;line-height:9px;color:#42464d;white-space:nowrap">Working Forecast<br>Baseline</div>
<div class="a" style="left:26.70px;width:80px;text-align:right;top:60.00px;font-size:6.5px;line-height:6.5px;color:#42464d;">364,948,737</div>
<div class="a" style="left:80.70px;width:80px;text-align:right;top:60.00px;font-size:6.5px;line-height:6.5px;color:#42464d;">91,905,931</div>
<div class="a" style="left:133.70px;width:80px;text-align:right;top:60.00px;font-size:6.5px;line-height:6.5px;color:#42464d;">28,366,476</div>
<div class="a" style="left:187.70px;width:80px;text-align:right;top:60.00px;font-size:6.5px;line-height:6.5px;color:#42464d;">28,345,026</div>
<div class="a" style="left:240.70px;width:80px;text-align:right;top:60.00px;font-size:6.5px;line-height:6.5px;color:#42464d;">35,194,429</div>
<div class="a" style="left:294.70px;width:80px;text-align:right;top:60.00px;font-size:6.5px;line-height:6.5px;color:#42464d;">90,968,568</div>
<div class="a" style="left:347.70px;width:80px;text-align:right;top:60.00px;font-size:6.5px;line-height:6.5px;color:#42464d;">28,001,754</div>
<div class="a" style="left:401.70px;width:80px;text-align:right;top:60.00px;font-size:6.5px;line-height:6.5px;color:#42464d;">27,936,254</div>
<div class="a" style="left:454.70px;width:80px;text-align:right;top:60.00px;font-size:6.5px;line-height:6.5px;color:#42464d;">35,030,560</div>
<div class="a" style="left:508.70px;width:80px;text-align:right;top:60.00px;font-size:6.5px;line-height:6.5px;color:#42464d;">91,042,958</div>
<div class="a" style="left:562.70px;width:80px;text-align:right;top:60.00px;font-size:6.5px;line-height:6.5px;color:#42464d;">27,991,554</div>
<div class="a" style="left:615.70px;width:80px;text-align:right;top:60.00px;font-size:6.5px;line-height:6.5px;color:#42464d;">27,993,666</div>
<div class="a" style="left:669.70px;width:80px;text-align:right;top:60.00px;font-size:6.5px;line-height:6.5px;color:#42464d;">35,057,030</div>
<div class="a" style="left:1.00px;top:78px;width:800.00px;height:16px;background:#dcdcdc;"></div>
<div class="a" style="left:2px;top:78px;font-size:6.5px;line-height:9px;color:#42464d;white-space:nowrap">Total Adjustment</div>
<div class="a" style="left:26.70px;width:80px;text-align:right;top:80.00px;font-size:6.5px;line-height:6.5px;color:#42464d;">0</div>
<div class="a" style="left:80.70px;width:80px;text-align:right;top:80.00px;font-size:6.5px;line-height:6.5px;color:#42464d;">0</div>
<div class="a" style="left:133.70px;width:80px;text-align:right;top:80.00px;font-size:6.5px;line-height:6.5px;color:#42464d;">0</div>
<div class="a" style="left:187.70px;width:80px;text-align:right;top:80.00px;font-size:6.5px;line-height:6.5px;color:#42464d;">0</div>
<div class="a" style="left:240.70px;width:80px;text-align:right;top:80.00px;font-size:6.5px;line-height:6.5px;color:#42464d;">0</div>
<div class="a" style="left:294.70px;width:80px;text-align:right;top:80.00px;font-size:6.5px;line-height:6.5px;color:#42464d;">0</div>
<div class="a" style="left:347.70px;width:80px;text-align:right;top:80.00px;font-size:6.5px;line-height:6.5px;color:#42464d;">0</div>
<div class="a" style="left:401.70px;width:80px;text-align:right;top:80.00px;font-size:6.5px;line-height:6.5px;color:#42464d;">0</div>
<div class="a" style="left:454.70px;width:80px;text-align:right;top:80.00px;font-size:6.5px;line-height:6.5px;color:#42464d;">0</div>
<div class="a" style="left:508.70px;width:80px;text-align:right;top:80.00px;font-size:6.5px;line-height:6.5px;color:#42464d;">0</div>
<div class="a" style="left:562.70px;width:80px;text-align:right;top:80.00px;font-size:6.5px;line-height:6.5px;color:#42464d;">0</div>
<div class="a" style="left:615.70px;width:80px;text-align:right;top:80.00px;font-size:6.5px;line-height:6.5px;color:#42464d;">0</div>
<div class="a" style="left:669.70px;width:80px;text-align:right;top:80.00px;font-size:6.5px;line-height:6.5px;color:#42464d;">0</div>
<div class="a" style="left:1.00px;top:95px;width:800.00px;height:28px;background:#dcdcdc;"></div>
<div class="a" style="left:2px;top:95px;font-size:6.5px;line-height:9px;color:#42464d;white-space:nowrap">Shipments<br>Actuals and<br>Demand Plan</div>
<div class="a" style="left:26.70px;width:80px;text-align:right;top:97.00px;font-size:6.5px;line-height:6.5px;color:#42464d;">365,864,507</div>
<div class="a" style="left:80.70px;width:80px;text-align:right;top:97.00px;font-size:6.5px;line-height:6.5px;color:#42464d;">92,821,700</div>
<div class="a" style="left:133.70px;width:80px;text-align:right;top:97.00px;font-size:6.5px;line-height:6.5px;color:#42464d;">28,493,412</div>
<div class="a" style="left:187.70px;width:80px;text-align:right;top:97.00px;font-size:6.5px;line-height:6.5px;color:#42464d;">28,945,430</div>
<div class="a" style="left:240.70px;width:80px;text-align:right;top:97.00px;font-size:6.5px;line-height:6.5px;color:#42464d;">35,382,858</div>
<div class="a" style="left:294.70px;width:80px;text-align:right;top:97.00px;font-size:6.5px;line-height:6.5px;color:#42464d;">90,968,568</div>
<div class="a" style="left:347.70px;width:80px;text-align:right;top:97.00px;font-size:6.5px;line-height:6.5px;color:#42464d;">28,001,754</div>
<div class="a" style="left:401.70px;width:80px;text-align:right;top:97.00px;font-size:6.5px;line-height:6.5px;color:#42464d;">27,936,254</div>
<div class="a" style="left:454.70px;width:80px;text-align:right;top:97.00px;font-size:6.5px;line-height:6.5px;color:#42464d;">35,030,560</div>
<div class="a" style="left:508.70px;width:80px;text-align:right;top:97.00px;font-size:6.5px;line-height:6.5px;color:#42464d;">91,042,958</div>
<div class="a" style="left:562.70px;width:80px;text-align:right;top:97.00px;font-size:6.5px;line-height:6.5px;color:#42464d;">27,991,554</div>
<div class="a" style="left:615.70px;width:80px;text-align:right;top:97.00px;font-size:6.5px;line-height:6.5px;color:#42464d;">27,993,666</div>
<div class="a" style="left:669.70px;width:80px;text-align:right;top:97.00px;font-size:6.5px;line-height:6.5px;color:#42464d;">35,057,030</div>
<div class="a" style="left:1.00px;top:124px;width:800.00px;height:19px;background:#dcdcdc;"></div>
<div class="a" style="left:2px;top:124px;font-size:6.5px;line-height:9px;color:#42464d;white-space:nowrap">Prior Year<br>Shipments</div>
<div class="a" style="left:26.70px;width:80px;text-align:right;top:126.00px;font-size:6.5px;line-height:6.5px;color:#42464d;">371,441,928</div>
<div class="a" style="left:80.70px;width:80px;text-align:right;top:126.00px;font-size:6.5px;line-height:6.5px;color:#42464d;">94,327,827</div>
<div class="a" style="left:133.70px;width:80px;text-align:right;top:126.00px;font-size:6.5px;line-height:6.5px;color:#42464d;">28,546,574</div>
<div class="a" style="left:187.70px;width:80px;text-align:right;top:126.00px;font-size:6.5px;line-height:6.5px;color:#42464d;">29,325,055</div>
<div class="a" style="left:240.70px;width:80px;text-align:right;top:126.00px;font-size:6.5px;line-height:6.5px;color:#42464d;">36,456,198</div>
<div class="a" style="left:294.70px;width:80px;text-align:right;top:126.00px;font-size:6.5px;line-height:6.5px;color:#42464d;">89,393,954</div>
<div class="a" style="left:347.70px;width:80px;text-align:right;top:126.00px;font-size:6.5px;line-height:6.5px;color:#42464d;">28,153,983</div>
<div class="a" style="left:401.70px;width:80px;text-align:right;top:126.00px;font-size:6.5px;line-height:6.5px;color:#42464d;">27,063,601</div>
<div class="a" style="left:454.70px;width:80px;text-align:right;top:126.00px;font-size:6.5px;line-height:6.5px;color:#42464d;">34,176,370</div>
<div class="a" style="left:508.70px;width:80px;text-align:right;top:126.00px;font-size:6.5px;line-height:6.5px;color:#42464d;">94,373,617</div>
<div class="a" style="left:562.70px;width:80px;text-align:right;top:126.00px;font-size:6.5px;line-height:6.5px;color:#42464d;">27,771,293</div>
<div class="a" style="left:615.70px;width:80px;text-align:right;top:126.00px;font-size:6.5px;line-height:6.5px;color:#42464d;">29,685,877</div>
<div class="a" style="left:669.70px;width:80px;text-align:right;top:126.00px;font-size:6.5px;line-height:6.5px;color:#42464d;">36,916,010</div>
<div class="a" style="left:1.00px;top:144px;width:800.00px;height:19px;background:#dcdcdc;"></div>
<div class="a" style="left:2px;top:144px;font-size:6.5px;line-height:9px;color:#42464d;white-space:nowrap">DC Receipts<br>Quantity</div>
<div class="a" style="left:26.70px;width:80px;text-align:right;top:146.00px;font-size:6.5px;line-height:6.5px;color:#42464d;">6,452</div>
<div class="a" style="left:80.70px;width:80px;text-align:right;top:146.00px;font-size:6.5px;line-height:6.5px;color:#42464d;">6,452</div>
<div class="a" style="left:133.70px;width:80px;text-align:right;top:146.00px;font-size:6.5px;line-height:6.5px;color:#42464d;">3,283</div>
<div class="a" style="left:187.70px;width:80px;text-align:right;top:146.00px;font-size:6.5px;line-height:6.5px;color:#42464d;">3,169</div>
<div class="a" style="left:240.70px;width:80px;text-align:right;top:146.00px;font-size:6.5px;line-height:6.5px;color:#42464d;">0</div>
<div class="a" style="left:294.70px;width:80px;text-align:right;top:146.00px;font-size:6.5px;line-height:6.5px;color:#42464d;">0</div>
<div class="a" style="left:347.70px;width:80px;text-align:right;top:146.00px;font-size:6.5px;line-height:6.5px;color:#42464d;">0</div>
<div class="a" style="left:401.70px;width:80px;text-align:right;top:146.00px;font-size:6.5px;line-height:6.5px;color:#42464d;">0</div>
<div class="a" style="left:454.70px;width:80px;text-align:right;top:146.00px;font-size:6.5px;line-height:6.5px;color:#42464d;">0</div>
<div class="a" style="left:508.70px;width:80px;text-align:right;top:146.00px;font-size:6.5px;line-height:6.5px;color:#42464d;">0</div>
<div class="a" style="left:562.70px;width:80px;text-align:right;top:146.00px;font-size:6.5px;line-height:6.5px;color:#42464d;">0</div>
<div class="a" style="left:615.70px;width:80px;text-align:right;top:146.00px;font-size:6.5px;line-height:6.5px;color:#42464d;">0</div>
<div class="a" style="left:669.70px;width:80px;text-align:right;top:146.00px;font-size:6.5px;line-height:6.5px;color:#42464d;">0</div>
<div class="a" style="left:1.00px;top:164px;width:800.00px;height:16px;background:#dcdcdc;"></div>
<div class="a" style="left:2px;top:164px;font-size:6.5px;line-height:9px;color:#42464d;white-space:nowrap">Ending Inventory</div>
<div class="a" style="left:26.70px;width:80px;text-align:right;top:166.00px;font-size:6.5px;line-height:6.5px;color:#42464d;">13,567,610</div>
<div class="a" style="left:80.70px;width:80px;text-align:right;top:166.00px;font-size:6.5px;line-height:6.5px;color:#42464d;">13,567,610</div>
<div class="a" style="left:133.70px;width:80px;text-align:right;top:166.00px;font-size:6.5px;line-height:6.5px;color:#42464d;">42,509,871</div>
<div class="a" style="left:187.70px;width:80px;text-align:right;top:166.00px;font-size:6.5px;line-height:6.5px;color:#42464d;">13,567,610</div>
<div class="a" style="left:240.70px;width:80px;text-align:right;top:166.00px;font-size:6.5px;line-height:6.5px;color:#42464d;">13,567,610</div>
<div class="a" style="left:294.70px;width:80px;text-align:right;top:166.00px;font-size:6.5px;line-height:6.5px;color:#42464d;">13,567,610</div>
<div class="a" style="left:347.70px;width:80px;text-align:right;top:166.00px;font-size:6.5px;line-height:6.5px;color:#42464d;">13,567,610</div>
<div class="a" style="left:401.70px;width:80px;text-align:right;top:166.00px;font-size:6.5px;line-height:6.5px;color:#42464d;">13,567,610</div>
<div class="a" style="left:454.70px;width:80px;text-align:right;top:166.00px;font-size:6.5px;line-height:6.5px;color:#42464d;">13,567,610</div>
<div class="a" style="left:508.70px;width:80px;text-align:right;top:166.00px;font-size:6.5px;line-height:6.5px;color:#42464d;">13,567,610</div>
<div class="a" style="left:562.70px;width:80px;text-align:right;top:166.00px;font-size:6.5px;line-height:6.5px;color:#42464d;">13,567,610</div>
<div class="a" style="left:615.70px;width:80px;text-align:right;top:166.00px;font-size:6.5px;line-height:6.5px;color:#42464d;">13,567,610</div>
<div class="a" style="left:669.70px;width:80px;text-align:right;top:166.00px;font-size:6.5px;line-height:6.5px;color:#42464d;">13,567,610</div>
<div class="a" style="left:53.00px;top:21px;width:2.00px;height:160px;background:#eaeaea;"></div>
<div class="a" style="left:107.00px;top:21px;width:1.00px;height:160px;background:#eaeaea;"></div>
<div class="a" style="left:161.00px;top:21px;width:1.00px;height:160px;background:#eaeaea;"></div>
<div class="a" style="left:214.00px;top:21px;width:1.00px;height:160px;background:#eaeaea;"></div>
<div class="a" style="left:268.00px;top:21px;width:1.00px;height:160px;background:#eaeaea;"></div>
<div class="a" style="left:321.00px;top:21px;width:1.00px;height:160px;background:#eaeaea;"></div>
<div class="a" style="left:375.00px;top:21px;width:1.00px;height:160px;background:#eaeaea;"></div>
<div class="a" style="left:428.00px;top:21px;width:1.00px;height:160px;background:#eaeaea;"></div>
<div class="a" style="left:482.00px;top:21px;width:1.00px;height:160px;background:#eaeaea;"></div>
<div class="a" style="left:535.00px;top:21px;width:1.00px;height:160px;background:#eaeaea;"></div>
<div class="a" style="left:589.00px;top:21px;width:1.00px;height:160px;background:#eaeaea;"></div>
<div class="a" style="left:643.00px;top:21px;width:1.00px;height:160px;background:#eaeaea;"></div>
<div class="a" style="left:696.00px;top:21px;width:1.00px;height:160px;background:#eaeaea;"></div>
<div class="a" style="left:1.00px;top:37px;width:800.00px;height:1px;background:#eaeaea;"></div>
<div class="a" style="left:1.00px;top:57px;width:800.00px;height:1px;background:#eaeaea;"></div>
<div class="a" style="left:1.00px;top:77px;width:800.00px;height:1px;background:#eaeaea;"></div>
<div class="a" style="left:1.00px;top:94px;width:800.00px;height:1px;background:#eaeaea;"></div>
<div class="a" style="left:1.00px;top:123px;width:800.00px;height:1px;background:#eaeaea;"></div>
<div class="a" style="left:1.00px;top:143px;width:800.00px;height:1px;background:#eaeaea;"></div>
<div class="a" style="left:1.00px;top:163px;width:800.00px;height:1px;background:#eaeaea;"></div>
<div class="a" style="left:1.00px;top:180px;width:800.00px;height:1px;background:#eaeaea;"></div>
</div>
</body></html>
